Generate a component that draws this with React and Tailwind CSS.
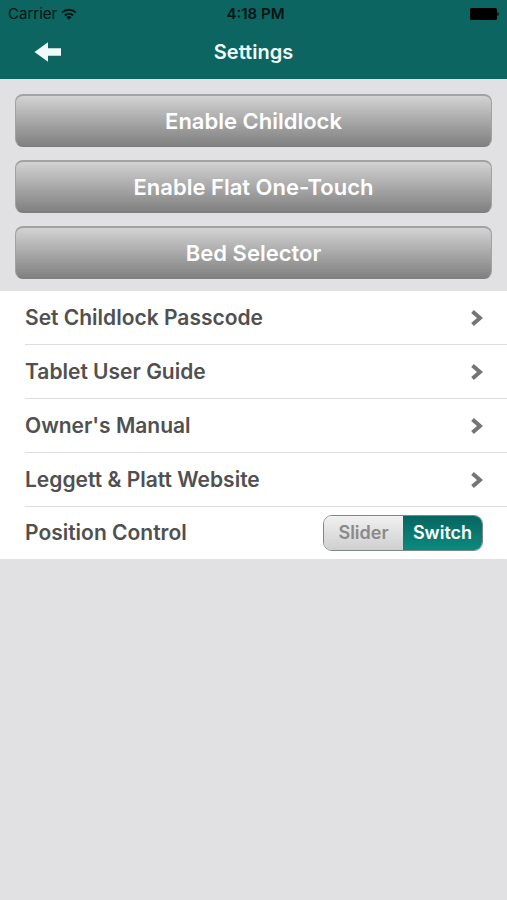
import React, { useState } from 'react';

const actions = ["Enable Childlock", "Enable Flat One-Touch", "Bed Selector"];
const links = ["Set Childlock Passcode", "Tablet User Guide", "Owner's Manual", "Leggett & Platt Website"];
const positions = ["Slider", "Switch"];

const StatusBar = () => (
    <div className="grid grid-cols-3 items-center h-7 pl-2 pr-1 text-[15px] text-[#021414]">
        <div className="flex items-center gap-1">
            <span>Carrier</span>
            <svg className="w-4 h-3" viewBox="0 0 16 12" fill="none" stroke="#021414" strokeWidth="2">
                <path d="M1.2 4.6a9.8 9.8 0 0 1 13.6 0M3.9 7.4a6 6 0 0 1 8.2 0" />
                <path d="M8 11.8 5.4 9.2a3.8 3.8 0 0 1 5.2 0z" fill="#021414" stroke="none" />
            </svg>
        </div>
        <span className="text-center font-semibold">4:18 PM</span>
        <svg className="w-8 h-3 mr-1 justify-self-end" viewBox="0 0 32 12" fill="#000">
            <rect x="3" y="0" width="27" height="12" rx="1.500" />
            <path d="M30.500 4c1.700 .3 1.700 3.700 0 4z" />
        </svg>
    </div>
);

const Chevron = () => (
    <svg className="w-3 h-4" viewBox="0 0 12 16" fill="none" stroke="#757575" strokeWidth="4">
        <path d="M1.500 1.500 9 8l-7.500 6.500" />
    </svg>
);

export default function App() {
    const [position, setPosition] = useState("Switch");

    return (
        <div className="min-h-screen bg-[#e1e1e3] font-[Inter,sans-serif]">
            <header className="bg-[#0d6561] pb-1">
                <StatusBar />
                <div className="grid grid-cols-3 items-center h-[47px] px-8">
                    <button type="button" aria-label="Back" className="justify-self-start">
                        <svg className="w-8 h-6" viewBox="0 0 32 24" fill="#f1fafa">
                            <path d="M2.500 12 16 2.200V8.200h13v7.500H16v6.100z" />
                        </svg>
                    </button>
                    <h1 className="text-center text-xl font-semibold text-[#f1fafa]">Settings</h1>
                </div>
            </header>

            <main>
                <div className="flex flex-col gap-[13px] px-[15px] pt-[15px] pb-3">
                    {actions.map((label) => (
                        <button
                            key={label}
                            type="button"
                            className="h-[53px] rounded-lg border border-t-2 border-[#a2a2a2] border-b-[#7d7d7d] bg-linear-to-b from-[#d3d3d3] to-[#808080] text-[22px] font-semibold text-white"
                        >
                            {label}
                        </button>
                    ))}
                </div>

                <ul className="bg-white pl-[25px] text-[21px] font-semibold text-[#505050]">
                    {links.map((label) => (
                        <li key={label} className="border-b border-[#dedee0]">
                            <a href="#" className="flex items-center justify-between h-[53px] pr-6">
                                {label}
                                <Chevron />
                            </a>
                        </li>
                    ))}
                    <li>
                        <fieldset className="flex items-center justify-between h-[52px] pr-6">
                            <legend className="float-left">Position Control</legend>
                            {/* Segmented control */}
                            <div className="flex h-9 rounded-[9px] border border-[#7c8886] overflow-hidden text-lg">
                                {positions.map((name) => (
                                    <label
                                        key={name}
                                        className="flex items-center justify-center w-[79px] bg-linear-to-b from-[#f1f1f1] to-[#cfcfcf] text-[#8a8a8a] has-checked:from-[#066660] has-checked:to-[#0c8a80] has-checked:text-white"
                                    >
                                        <input
                                            type="radio"
                                            name="position"
                                            value={name}
                                            checked={position === name}
                                            onChange={(e) => setPosition(e.target.value)}
                                            className="sr-only"
                                        />
                                        {name}
                                    </label>
                                ))}
                            </div>
                        </fieldset>
                    </li>
                </ul>
            </main>
        </div>
    );
}
